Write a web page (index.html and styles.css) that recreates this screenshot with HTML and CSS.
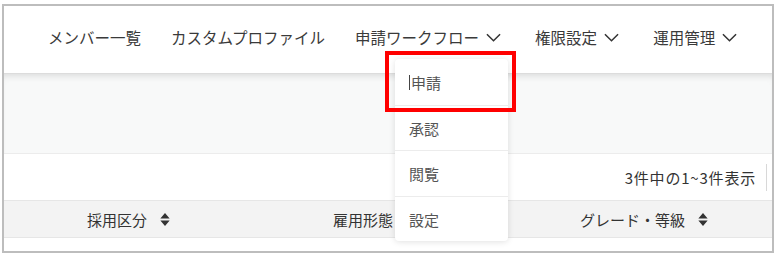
FILE: index.html
```html
<!DOCTYPE html>
<html lang="ja">
<head>
<meta charset="utf-8">
<link rel="stylesheet" href="styles.css">
</head>
<body>
<div class="frame">
  <nav class="nav">
    <span class="nav-item">メンバー一覧</span>
    <span class="nav-item">カスタムプロファイル</span>
    <span class="nav-item has-menu">申請ワークフロー<svg class="chev" viewBox="0 0 16 9"><path d="M1 1 L8 8 L15 1" /></svg></span>
    <span class="nav-item has-menu">権限設定<svg class="chev" viewBox="0 0 16 9"><path d="M1 1 L8 8 L15 1" /></svg></span>
    <span class="nav-item has-menu">運用管理<svg class="chev" viewBox="0 0 16 9"><path d="M1 1 L8 8 L15 1" /></svg></span>
  </nav>
  <div class="filter-area"></div>
  <div class="info-row">
    <span class="count">3件中の1~3件表示</span>
    <span class="divider"></span>
  </div>
  <div class="table-head">
    <div class="th">採用区分<svg class="sort" viewBox="0 0 10 14"><path d="M0 6 L5 0 L10 6 Z M0 8 L10 8 L5 14 Z" /></svg></div>
    <div class="th">雇用形態<svg class="sort" viewBox="0 0 10 14"><path d="M0 6 L5 0 L10 6 Z M0 8 L10 8 L5 14 Z" /></svg></div>
    <div class="th">グレード・等級<svg class="sort" viewBox="0 0 10 14"><path d="M0 6 L5 0 L10 6 Z M0 8 L10 8 L5 14 Z" /></svg></div>
  </div>
  <div class="table-body"></div>

  <ul class="menu">
    <li class="menu-item"><span class="caret"></span>申請</li>
    <li class="menu-item">承認</li>
    <li class="menu-item">閲覧</li>
    <li class="menu-item">設定</li>
  </ul>
  <div class="highlight"></div>
</div>
</body>
</html>
```
FILE: styles.css
```css
* { box-sizing: border-box; }
html, body { margin: 0; padding: 0; background: #fff; }
body {
  font-family: "Noto Sans CJK JP", "Noto Sans", sans-serif;
  color: #333;
}
.frame {
  position: relative;
  margin: 4px 0 0 2px;
  width: 772px;
  height: 249px;
  border: 2px solid #bdbdbd;
  overflow: hidden;
}
.nav {
  height: 67px;
  display: flex;
  align-items: center;
  gap: 30px;
  padding: 0 0 4px 44px;
  font-size: 15.5px;
  color: #3a3a3a;
  background: #fff;
}
.nav-item { white-space: nowrap; display: flex; align-items: center; line-height: 1; }
.has-menu { padding-right: 4px; }
.chev {
  width: 15px; height: 9px;
  margin-left: 7px;
  fill: none; stroke: #333; stroke-width: 1.6;
}
.filter-area {
  height: 81px;
  background: #f8f9f9;
  border-top: 1px solid #dcdcdc;
  border-bottom: 1px solid #ececec;
  box-shadow: inset 0 6px 7px -4px rgba(0,0,0,0.12);
}
.info-row {
  height: 46px;
  display: flex;
  align-items: center;
  justify-content: flex-end;
  padding-right: 5px;
  font-size: 15px;
  color: #333;
}
.count { letter-spacing: 0.8px; }
.divider {
  width: 1px; height: 27px;
  background: #d8d8d8;
  margin-left: 10px;
}
.table-head {
  height: 38px;
  display: grid;
  grid-template-columns: 246px 247px 1fr;
  background: #f3f3f3;
  border-top: 1px solid #e6e6e6;
  border-bottom: 1px solid #e6e6e6;
  font-size: 15px;
  color: #333;
}
.th {
  display: flex;
  align-items: center;
  padding-left: 83px;
  white-space: nowrap;
}
.sort { width: 10px; height: 13px; fill: #333; margin-left: 13px; }
.table-body { height: 12px; background: #fff; }

.menu {
  position: absolute;
  left: 391px;
  top: 53px;
  width: 113px;
  margin: 0;
  padding: 0;
  list-style: none;
  background: #fff;
  border-radius: 4px;
  box-shadow: 0 1px 6px rgba(0,0,0,0.12);
}
.menu-item {
  height: 45.5px;
  display: flex;
  align-items: center;
  padding: 1px 0 0 14px;
  font-size: 15px;
  color: #555;
  border-top: 1px solid #ececec;
}
.menu-item:first-child { border-top: none; }
.caret {
  display: inline-block;
  width: 1px; height: 15px;
  background: #444;
  margin-right: 1px;
}
.highlight {
  position: absolute;
  left: 381px;
  top: 45px;
  width: 131px;
  height: 61px;
  border: 4px solid #ff0000;
}
```
